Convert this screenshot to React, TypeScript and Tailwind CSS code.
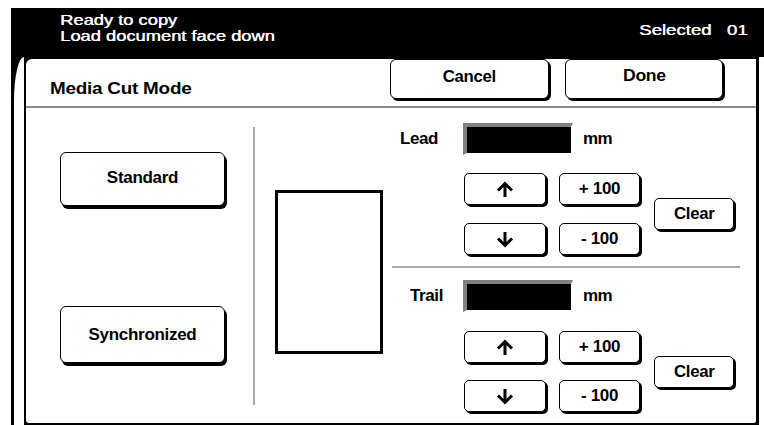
import React from "react";

const font = { fontFamily: "'Liberation Sans', Arial, sans-serif" };

function Arrow({ dir }: { dir: "up" | "down" }) {
  return (
    <svg width="20" height="17" viewBox="0 0 20 17" className={`shrink-0 ${dir === "down" ? "rotate-180" : ""}`}>
      <path d="M3 9.5 L10 2.5 L17 9.5 M10 2.5 V16" fill="none" stroke="#000" strokeWidth="3" />
    </svg>
  );
}

function Key({ className, children }: { className: string; children: React.ReactNode }) {
  return (
    <div className={`flex items-center justify-center bg-white border border-black rounded-[5px] shadow-[2px_2px_0_#000] ${className}`}>
      {children}
    </div>
  );
}

function Label({ size, children }: { size: string; children: React.ReactNode }) {
  return <span className={`inline-block font-bold leading-[18px] tracking-[-0.3px] ${size}`}>{children}</span>;
}

function Adjust({ label, labelPad, top }: { label: string; labelPad: string; top: string }) {
  return (
    <div className={`flex items-center ${top}`}>
      <div className={`w-[71px] ${labelPad}`}>
        <span className="inline-block font-bold text-[17px] tracking-[-0.4px]">{label}</span>
      </div>
      <div className="w-[110px] h-[32px] bg-black border-t-4 border-l-4 border-r-2 border-b-2 border-t-[#808080] border-l-[#808080] border-r-white border-b-white" />
      <span className="ml-[10px] inline-block font-bold text-[17px] tracking-[-0.6px]">mm</span>
    </div>
  );
}

function Steps({ mt, gapY }: { mt: string; gapY: string }) {
  return (
    <div className={`flex items-center ml-[72px] ${mt}`}>
      <div className={`grid grid-cols-[82px_81px] gap-x-[13px] ${gapY}`}>
        <Key className="h-[32px]"><Arrow dir="up" /></Key>
        <Key className="h-[32px]"><Label size="text-[16px] scale-x-[1.06]">+ 100</Label></Key>
        <Key className="h-[32px]"><Arrow dir="down" /></Key>
        <Key className="h-[32px]"><Label size="text-[16px] scale-x-[1.06]">- 100</Label></Key>
      </div>
      <Key className="ml-[14px] w-[80px] h-[32px]"><Label size="text-[16px] scale-x-[1.05]">Clear</Label></Key>
    </div>
  );
}

export default function App() {
  return (
    <div className="w-[764px] h-[425px] overflow-hidden bg-white flex flex-col pt-[8px] text-black" style={font}>
      {/* status bar */}
      <div className="ml-[11px] h-[49px] shrink-0 bg-black text-white flex justify-between">
        <div className="pl-[49px] pt-[4px] text-[15px] leading-[16px] [text-shadow:0.4px_0_0_#fff]">
          <div className="origin-left scale-x-[1.22]">Ready to copy</div>
          <div className="origin-left scale-x-[1.22]">Load document face down</div>
        </div>
        <div className="pr-[16px] pt-[14px] text-[15px] leading-[16px] [text-shadow:0.4px_0_0_#fff]">
          <span className="inline-block origin-right scale-x-[1.24]">Selected&nbsp;&nbsp;&nbsp;01</span>
        </div>
      </div>

      <div className="flex flex-1">
        {/* left tab edge */}
        <div className="ml-[11px] w-[13px] bg-black">
          <div className="ml-[3px] h-full bg-white rounded-tl-[10px_44px]" />
        </div>

        {/* panel */}
        <div className="w-[735px] h-[368px] bg-black">
          <div className="h-full flex flex-col bg-white border-t-2 border-l-2 border-r-[3px] border-b-2 border-black rounded-tl-[8px] rounded-b-[5px]">
            <div className="h-[49px] shrink-0 flex items-start border-b-2 border-[#8a8a8a]">
              <div className="pl-[24px] mt-[18px]">
                <span className="inline-block origin-left scale-x-[1.18] font-bold text-[16px] leading-[16px] tracking-[-0.2px]">Media Cut Mode</span>
              </div>
              <div className="ml-auto mr-[33px] flex gap-[16px]">
                <Key className="w-[159px] h-[40px] pb-[5px] rounded-[6px]"><Label size="text-[16px] scale-x-[1.05]">Cancel</Label></Key>
                <Key className="w-[158px] h-[40px] pb-[7px] rounded-[6px]"><Label size="text-[16px] scale-x-[1.1]">Done</Label></Key>
              </div>
            </div>

            <div className="flex flex-1">
              <div className="w-[229px] mt-[19px] mb-[18px] border-r-2 border-[#a8a8a8] flex flex-col pl-[34px]">
                <Key className="mt-[25px] w-[165px] h-[54px] pb-[3px] rounded-[6px] shadow-[2px_3px_0_#000]"><Label size="text-[17px]">Standard</Label></Key>
                <Key className="mt-[100px] w-[165px] h-[57px] rounded-[6px] shadow-[2px_3px_0_#000]"><Label size="text-[17px]">Synchronized</Label></Key>
              </div>

              <div className="w-[137px]">
                <div className="ml-[20px] mt-[82px] w-[108px] h-[164px] border-[3px] border-black" />
              </div>

              <div className="w-[348px] flex flex-col">
                <div className="h-[160px] border-b-2 border-[#a8a8a8]">
                  <Adjust label="Lead" labelPad="pl-[8px]" top="mt-[15px]" />
                  <Steps mt="mt-[18px]" gapY="gap-y-[18px]" />
                </div>
                <div>
                  <Adjust label="Trail" labelPad="pl-[18px]" top="mt-[12px]" />
                  <Steps mt="mt-[19px]" gapY="gap-y-[17px]" />
                </div>
              </div>
            </div>
          </div>
        </div>
      </div>
    </div>
  );
}
